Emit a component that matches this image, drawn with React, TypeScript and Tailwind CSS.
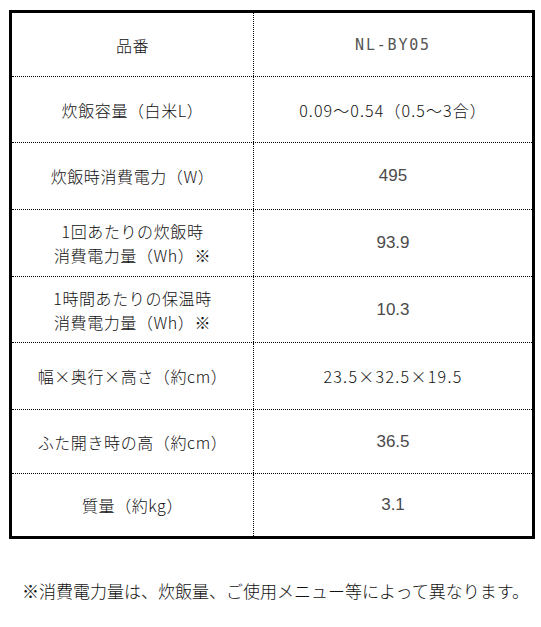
import React from "react";

const jp = { fontFamily: '"Noto Sans CJK JP", "Noto Sans", sans-serif' };

type Row = { h: string; label: React.ReactNode; value: React.ReactNode; valueClass?: string };

const num = "font-['Liberation_Sans',Arial,sans-serif] font-normal text-[17px] text-[#4a4a4a]";

const rows: Row[] = [
  { h: "h-[63px]", label: "品番", value: "NL-BY05", valueClass: "font-['DejaVu_Sans_Mono',monospace] font-normal text-[15px] tracking-[1.8px] text-[#555]" },
  { h: "h-[66px]", label: "炊飯容量（白米L）", value: "0.09〜0.54（0.5〜3合）", valueClass: "text-[16px] tracking-[1.1px]" },
  { h: "h-[67px]", label: "炊飯時消費電力（W）", value: "495", valueClass: num },
  {
    h: "h-[67px]",
    label: (
      <>
        1回あたりの炊飯時
        <br />
        消費電力量（Wh）※
      </>
    ),
    value: "93.9",
    valueClass: num,
  },
  {
    h: "h-[66px]",
    label: (
      <>
        1時間あたりの保温時
        <br />
        消費電力量（Wh）※
      </>
    ),
    value: "10.3",
    valueClass: num,
  },
  { h: "h-[67px]", label: "幅×奥行×高さ（約cm）", value: "23.5×32.5×19.5", valueClass: "text-[16px] tracking-[1.3px]" },
  { h: "h-[64px]", label: "ふた開き時の高（約cm）", value: "36.5", valueClass: num },
  { h: "h-[63px]", label: "質量（約kg）", value: "3.1", valueClass: num },
];

export default function App() {
  return (
    <div className="w-[541px] h-[627px] bg-white text-[#111] font-light overflow-hidden" style={jp}>
      <div className="pt-[10px] pl-[9px]">
        <div className="w-[526px] border-[3px] border-black flex flex-col">
          {rows.map((r, i) => (
            <div
              key={i}
              className={`flex ${r.h} ${i > 0 ? "border-t border-dotted border-black" : ""}`}
            >
              <div className="w-[242px] border-r border-dotted border-black flex items-center justify-center text-center text-[16px] leading-[24px] tracking-[0.6px]">
                <div>{r.label}</div>
              </div>
              <div className={`flex-1 flex items-center justify-center text-center leading-[24px] ${r.valueClass ?? ""}`}>
                {r.value}
              </div>
            </div>
          ))}
        </div>
      </div>
      <div className="mt-[40px] pl-[22px] text-[17px] leading-[24px] whitespace-nowrap">
        ※消費電力量は、炊飯量、ご使用メニュー等によって異なります。
      </div>
    </div>
  );
}
